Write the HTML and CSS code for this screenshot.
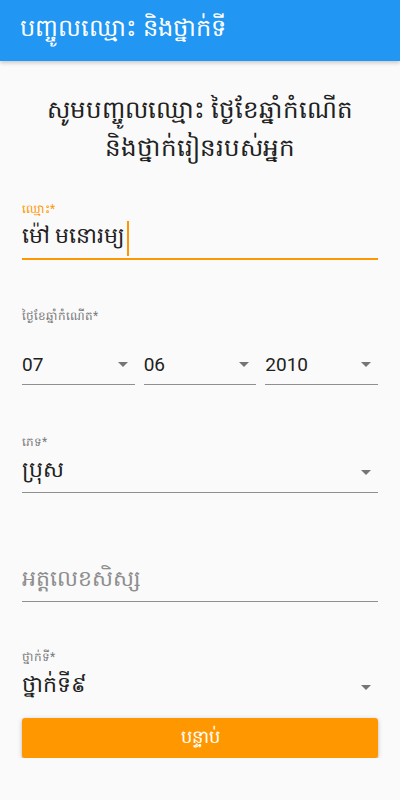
FILE: index.html
```html
<!DOCTYPE html>
<html lang="km">
<head>
    <meta charset="UTF-8">
    <meta name="viewport" content="width=device-width, initial-scale=1.0">
    <title>បញ្ចូលឈ្មោះ និងថ្នាក់ទី</title>
    <link rel="stylesheet" href="styles.css">
</head>
<body>
    <header class="app-bar">
        <h1>បញ្ចូលឈ្មោះ និងថ្នាក់ទី</h1>
    </header>

    <main class="container">
        <h2 class="intro">សូមបញ្ចូលឈ្មោះ ថ្ងៃខែឆ្នាំកំណើត<br>និងថ្នាក់រៀនរបស់អ្នក</h2>

        <div class="field field-name focused">
            <label>ឈ្មោះ*</label>
            <div class="control">
                <span class="value">ម៉ៅ មនោរម្យ</span><span class="caret"></span>
            </div>
        </div>

        <div class="field">
            <label>ថ្ងៃខែឆ្នាំកំណើត*</label>
            <div class="date-row">
                <div class="control select">
                    <span class="value num">07</span>
                    <svg class="arrow" width="10" height="5" viewBox="0 0 10 5"><path d="M0 0h10L5 5z"/></svg>
                </div>
                <div class="control select">
                    <span class="value num">06</span>
                    <svg class="arrow" width="10" height="5" viewBox="0 0 10 5"><path d="M0 0h10L5 5z"/></svg>
                </div>
                <div class="control select">
                    <span class="value num">2010</span>
                    <svg class="arrow" width="10" height="5" viewBox="0 0 10 5"><path d="M0 0h10L5 5z"/></svg>
                </div>
            </div>
        </div>

        <div class="field field-tight">
            <label>ភេទ*</label>
            <div class="control select">
                <span class="value">ប្រុស</span>
                <svg class="arrow" width="10" height="5" viewBox="0 0 10 5"><path d="M0 0h10L5 5z"/></svg>
            </div>
        </div>

        <div class="field field-tight field-id">
            <label>&nbsp;</label>
            <div class="control">
                <span class="value placeholder">អត្តលេខសិស្ស</span>
            </div>
        </div>

        <div class="field field-tight field-grade">
            <label>ថ្នាក់ទី*</label>
            <div class="control select no-line">
                <span class="value">ថ្នាក់ទី៩</span>
                <svg class="arrow" width="10" height="5" viewBox="0 0 10 5"><path d="M0 0h10L5 5z"/></svg>
            </div>
        </div>

        <button type="button" class="next-btn">បន្ទាប់</button>
    </main>
</body>
</html>
```

FILE: styles.css
```css
body {
    margin: 0;
    padding: 0;
    background-color: #fafafa;
    font-family: Roboto, "Noto Sans", sans-serif;
    color: #212121;
}

.app-bar {
    height: 61px;
    background-color: #2196f3;
    box-shadow: 0 2px 4px rgba(0, 0, 0, 0.2);
    display: flex;
    align-items: center;
    padding: 0 20px;
}

.app-bar h1 {
    margin: 0;
    color: #ffffff;
    font-size: 24px;
    font-weight: normal;
}

.container {
    padding: 0 22px;
    display: flex;
    flex-direction: column;
}

.intro {
    margin: 30px 0 0;
    text-align: center;
    font-size: 24.5px;
    font-weight: normal;
    line-height: 38px;
    color: #212121;
}

.field {
    display: flex;
    flex-direction: column;
    margin-top: 47px;
}

.field label {
    font-size: 12px;
    line-height: 18px;
    color: #7a7a7a;
}

.field-name {
    margin-top: 33px;
}

.field-name.focused label {
    color: #ff9800;
}

.control {
    display: flex;
    align-items: center;
    height: 40px;
    border-bottom: 1px solid #8f8f8f;
}

.field-name .control {
    border-bottom: 2px solid #ff9800;
}

.value {
    font-size: 22px;
    color: #212121;
    white-space: nowrap;
}

.num {
    font-size: 19px;
}

.placeholder {
    color: #8e8e8e;
}

.caret {
    width: 2px;
    height: 35px;
    margin-left: 2px;
    background-color: #ff9800;
}

.select {
    justify-content: space-between;
    padding-right: 7px;
}

.arrow {
    fill: #757575;
}

.date-row {
    display: grid;
    grid-template-columns: 1fr 1fr 1fr;
    gap: 9px;
    margin-top: 19px;
}

.field-tight {
    margin-top: 48px;
}

.field-tight .control {
    margin-top: 1px;
}

.field-id {
    margin-top: 49px;
}

.field-grade {
    margin-top: 46px;
}

.no-line {
    border-bottom: none;
}

.next-btn {
    margin-top: 11px;
    height: 40px;
    padding: 0;
    border: none;
    border-radius: 3px;
    background-color: #ff9800;
    color: #ffffff;
    font-family: inherit;
    font-size: 18px;
    display: flex;
    justify-content: center;
    align-items: center;
    box-shadow: 0 1px 5px rgba(0, 0, 0, 0.2), 0 2px 2px rgba(0, 0, 0, 0.14), 0 3px 1px -2px rgba(0, 0, 0, 0.12);
    cursor: pointer;
}
```
